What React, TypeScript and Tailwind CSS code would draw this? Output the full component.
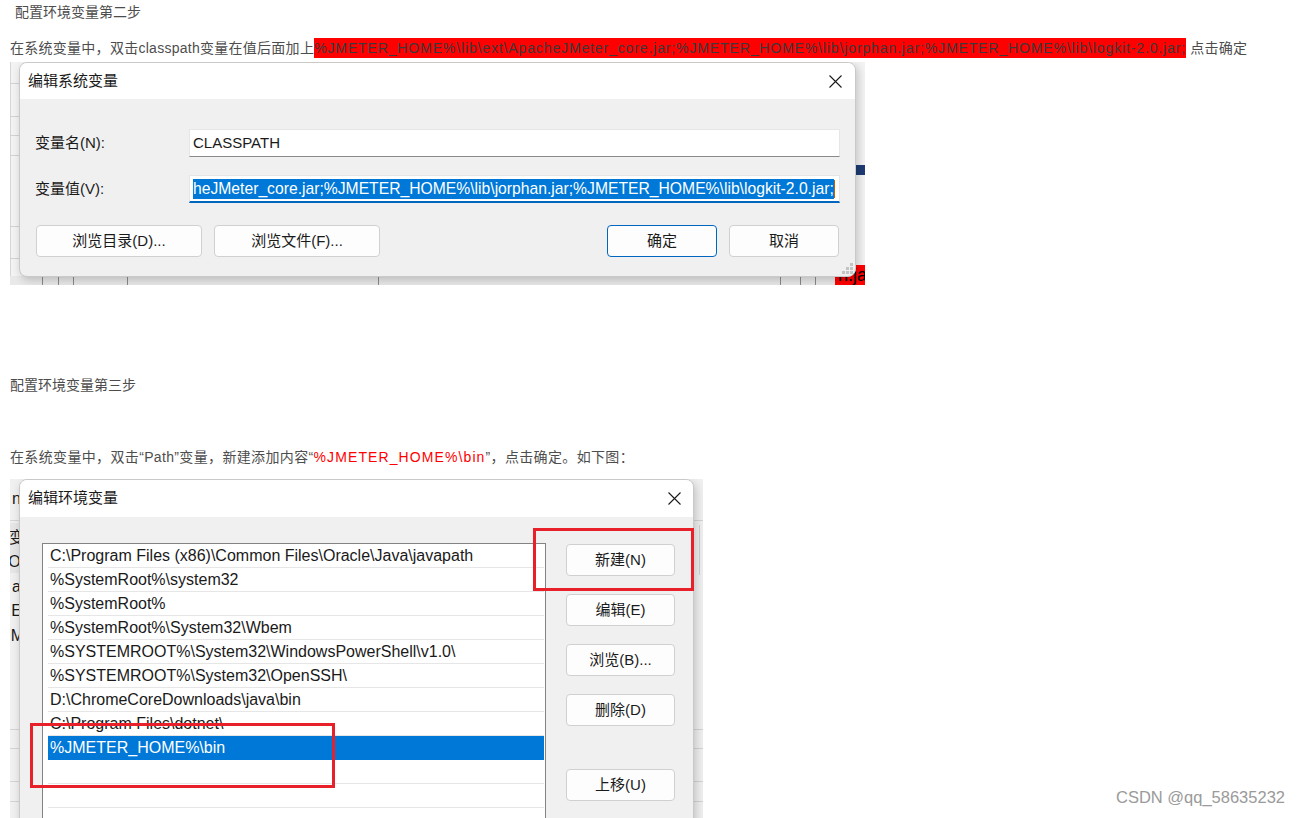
import React from "react";

const envPaths = [
  "C:\\Program Files (x86)\\Common Files\\Oracle\\Java\\javapath",
  "%SystemRoot%\\system32",
  "%SystemRoot%",
  "%SystemRoot%\\System32\\Wbem",
  "%SYSTEMROOT%\\System32\\WindowsPowerShell\\v1.0\\",
  "%SYSTEMROOT%\\System32\\OpenSSH\\",
  "D:\\ChromeCoreDownloads\\java\\bin",
  "C:\\Program Files\\dotnet\\",
  "%JMETER_HOME%\\bin",
  "",
  "",
  "",
];

function CloseIcon() {
  return (
    <svg width="13" height="13" viewBox="0 0 13 13" fill="none" stroke="#1a1a1a" strokeWidth="1.1">
      <path d="M0.5 0.5L12.5 12.5M12.5 0.5L0.5 12.5" />
    </svg>
  );
}

function Grip() {
  const dots = [
    [8, 0],
    [4, 4],
    [8, 4],
    [0, 8],
    [4, 8],
    [8, 8],
  ];
  return (
    <svg width="11" height="11" viewBox="0 0 11 11">
      {dots.map(([x, y], i) => (
        <rect key={i} x={x} y={y} width="3" height="3" fill="#c4c4c4" />
      ))}
    </svg>
  );
}

function WinButton({ label, w, primary }: { label: string; w: string; primary?: boolean }) {
  return (
    <div
      className={`flex h-[32px] ${w} items-center justify-center rounded-[4px] border bg-[#fdfdfd] text-[15px] text-[#1a1a1a] ${
        primary ? "border-[#0067c0]" : "border-[#d0d0d0]"
      }`}
    >
      {label}
    </div>
  );
}

function ClasspathShot() {
  return (
    <div className="relative ml-[10px] h-[223px] w-[855px] overflow-hidden bg-[#f3f3f3]">
      {/* window behind the dialog */}
      <div className="absolute left-0 top-0 h-full w-px bg-[#d6d6d6]" />
      {[21, 54, 73, 93, 164, 196].map((y) => (
        <div key={y} className="absolute left-0 h-px w-[12px] bg-[#d2d2d2]" style={{ top: y }} />
      ))}
      <div className="absolute bottom-0 left-0 h-[9px] w-full bg-[#e9e9e9]" />
      {[32, 48, 63, 117, 368, 770, 790, 805].map((x) => (
        <div key={x} className="absolute bottom-0 h-[9px] w-px bg-[#8a8a8a]" style={{ left: x }} />
      ))}
      <div className="absolute left-[846px] top-[103px] h-[10px] w-[9px] bg-[#1d3c74]" />
      <div className="absolute left-[825px] top-[203px] h-[20px] w-[32px] bg-[#ff0000] pl-[3px] text-[18px] leading-[20px] text-black">
        n.ja
      </div>

      {/* dialog */}
      <div className="absolute left-[9px] top-0 h-[215px] w-[837px] overflow-hidden rounded-[8px] border border-[#c9c9c9] bg-[#f0f0f0] shadow-[2px_3px_10px_rgba(0,0,0,0.2)]">
        <div className="flex h-[36px] items-center justify-between bg-white pl-[8px] pr-[13px]">
          <span className="text-[15px] text-[#1a1a1a]">编辑系统变量</span>
          <CloseIcon />
        </div>
        <div className="px-[15px] pt-[30px]">
          <div className="flex h-[28px] items-center">
            <span className="w-[154px] text-[15px] text-[#1a1a1a]">变量名(N):</span>
            <div className="flex h-[28px] flex-1 items-center border border-[#e6e6e6] border-b-[#8a8a8a] bg-white pl-[3px] text-[15px] text-[#1a1a1a]">
              CLASSPATH
            </div>
          </div>
          <div className="mt-[18px] flex h-[28px] items-center">
            <span className="w-[154px] text-[15px] text-[#1a1a1a]">变量值(V):</span>
            <div className="flex h-[28px] flex-1 items-center border border-[#e6e6e6] border-b-2 border-b-[#0067c0] bg-white pl-[3px] text-[15.7px]">
              <span className="whitespace-nowrap bg-[#0078d7] leading-[20px] text-white">
                heJMeter_core.jar;%JMETER_HOME%\lib\jorphan.jar;%JMETER_HOME%\lib\logkit-2.0.jar;
              </span>
              <span className="h-[18px] w-px shrink-0 bg-[#c06000]" />
            </div>
          </div>
          <div className="mt-[22px] flex justify-between px-px">
            <div className="flex gap-[12px]">
              <WinButton label="浏览目录(D)..." w="w-[166px]" />
              <WinButton label="浏览文件(F)..." w="w-[166px]" />
            </div>
            <div className="flex gap-[12px]">
              <WinButton label="确定" w="w-[110px]" primary />
              <WinButton label="取消" w="w-[110px]" />
            </div>
          </div>
        </div>
        <div className="absolute bottom-[2px] right-[2px]">
          <Grip />
        </div>
      </div>
    </div>
  );
}

function PathShot() {
  return (
    <div className="relative ml-[10px] h-[339px] w-[693px] overflow-hidden bg-[#f0f0f0]">
      {/* window behind the dialog */}
      <div className="absolute left-0 top-[41px] h-px w-full bg-[#d4d4d4]" />
      <div className="absolute left-0 top-[44px] h-[50px] w-[10px] bg-[#e6e6e6]" />
      {[250, 269, 302, 322].map((y) => (
        <div key={y} className="absolute left-0 h-px w-full bg-[#d4d4d4]" style={{ top: y }} />
      ))}
      <div className="absolute left-[689px] top-[46px] h-[50px] w-px bg-[#d0d0d0]" />
      <div className="absolute left-0 top-[8px] flex w-[9px] flex-col items-end overflow-hidden text-[16px] leading-[24.5px] text-[#1a1a1a]">
        <span className="mr-[-2px]">n</span>
        <span className="mt-[14px] mr-[-6px]">变</span>
        <span className="mr-[-7px]">Or</span>
        <span className="mr-[-2px]">a</span>
        <span className="mr-[-3px]">E</span>
        <span className="mr-[-5px]">M</span>
      </div>

      {/* dialog */}
      <div className="absolute left-[9px] top-0 h-[380px] w-[675px] overflow-hidden rounded-t-[8px] border border-[#c9c9c9] bg-[#f0f0f0] shadow-[2px_3px_10px_rgba(0,0,0,0.2)]">
        <div className="flex h-[37px] items-center justify-between bg-white pl-[8px] pr-[12px]">
          <span className="text-[15px] text-[#1a1a1a]">编辑环境变量</span>
          <CloseIcon />
        </div>
        <div className="flex gap-[20px] pl-[22px] pt-[26px]">
          <div className="h-[320px] w-[504px] border border-[#838383] bg-white">
            {envPaths.map((p, i) => {
              const selected = i === 8;
              return (
                <div
                  key={i}
                  className={`ml-[5px] mr-px flex h-[24px] items-center border-b pl-[2px] text-[16px] ${
                    selected ? "border-[#0078d7] bg-[#0078d7] text-white" : "border-[#e6e6e6] text-[#1a1a1a]"
                  }`}
                >
                  {p}
                </div>
              );
            })}
          </div>
          <div className="flex flex-col pt-px">
            <WinButton label="新建(N)" w="w-[109px]" />
            <div className="mt-[18px]">
              <WinButton label="编辑(E)" w="w-[109px]" />
            </div>
            <div className="mt-[18px]">
              <WinButton label="浏览(B)..." w="w-[109px]" />
            </div>
            <div className="mt-[18px]">
              <WinButton label="删除(D)" w="w-[109px]" />
            </div>
            <div className="mt-[43px]">
              <WinButton label="上移(U)" w="w-[109px]" />
            </div>
          </div>
        </div>
      </div>

      {/* annotations */}
      <div className="absolute left-[523px] top-[49px] h-[63px] w-[161px] border-[3px] border-[#e8202a]" />
      <div className="absolute left-[20px] top-[244px] h-[65px] w-[305px] border-[3px] border-[#e8202a]" />
    </div>
  );
}

export default function App() {
  return (
    <div className="relative h-[818px] w-[1300px] overflow-hidden bg-white font-['Liberation_Sans','Noto_Sans_CJK_SC',sans-serif] text-[14px] text-[#4d4d4d]">
      <p className="h-[24px] pl-[15px] leading-[24px]">配置环境变量第二步</p>
      <p className="mt-[12px] h-[24px] whitespace-nowrap pl-[10px] leading-[24px] tracking-[0.27px]">
        在系统变量中，双击classpath变量在值后面加上
        <span className="bg-[#ff0000] py-[2px] tracking-[0.87px] text-[#3a3a3a]">
          %JMETER_HOME%\lib\ext\ApacheJMeter_core.jar;%JMETER_HOME%\lib\jorphan.jar;%JMETER_HOME%\lib\logkit-2.0.jar;
        </span>{" "}
        点击确定
      </p>
      <div className="mt-[2px]">
        <ClasspathShot />
      </div>

      <p className="mt-[88px] h-[24px] pl-[10px] leading-[24px]">配置环境变量第三步</p>
      <p className="mt-[48px] h-[24px] whitespace-nowrap pl-[10px] leading-[24px] tracking-[0.35px]">
        在系统变量中，双击“Path”变量，新建添加内容“<span className="tracking-[1.1px] text-[#ff0000]">%JMETER_HOME%\bin</span>”，点击确定。如下图：
      </p>
      <div className="mt-[10px]">
        <PathShot />
      </div>

      <span className="absolute bottom-[8px] right-[15px] text-[16.5px] text-[#9a9a9a]">CSDN @qq_58635232</span>
    </div>
  );
}
